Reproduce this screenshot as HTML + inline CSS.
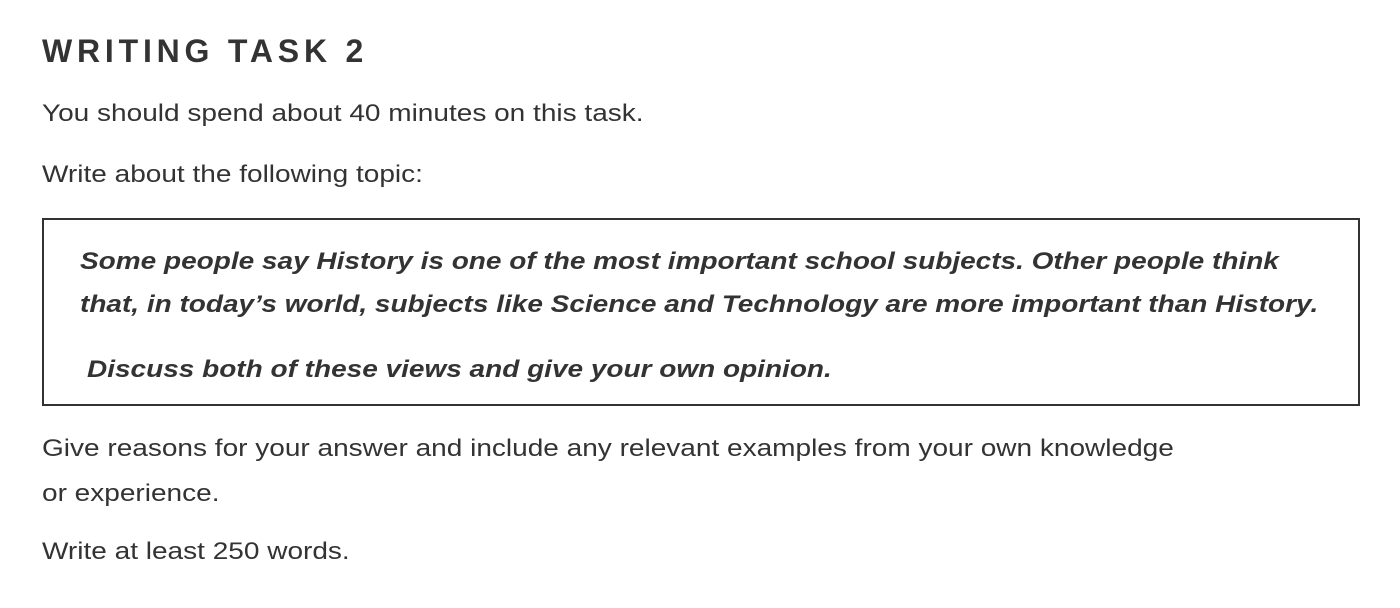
<!DOCTYPE html>
<html><head><meta charset="utf-8"><style>
body{margin:0;width:1400px;height:608px;background:#fff;position:relative;overflow:hidden;font-family:"Liberation Sans",Arial,sans-serif;color:#333}
.t{position:absolute;left:42px;font-size:24px;line-height:27.6px;white-space:nowrap;transform:scaleX(1.167);transform-origin:0 0}
h1{position:absolute;left:42px;top:35px;margin:0;font-size:32px;line-height:32px;font-weight:bold;letter-spacing:4.8px;color:#333}
.box{position:absolute;left:42px;top:218px;width:1314px;height:184px;border:2px solid #333}
.b{position:absolute;font-size:24px;line-height:27.6px;font-weight:bold;font-style:italic;white-space:nowrap;transform:scaleX(1.166);transform-origin:0 0}
</style></head><body>
<h1>WRITING TASK 2</h1>
<div class="t" style="top:100px">You should spend about 40 minutes on this task.</div>
<div class="t" style="top:161px">Write about the following topic:</div>
<div class="box"></div>
<div class="b" style="left:80px;top:248px">Some people say History is one of the most important school subjects. Other people think</div>
<div class="b" style="left:80px;top:291px">that, in today’s world, subjects like Science and Technology are more important than History.</div>
<div class="b" style="left:87px;top:356px">Discuss both of these views and give your own opinion.</div>
<div class="t" style="top:435px">Give reasons for your answer and include any relevant examples from your own knowledge</div>
<div class="t" style="top:480px">or experience.</div>
<div class="t" style="top:538px">Write at least 250 words.</div>
</body></html>
